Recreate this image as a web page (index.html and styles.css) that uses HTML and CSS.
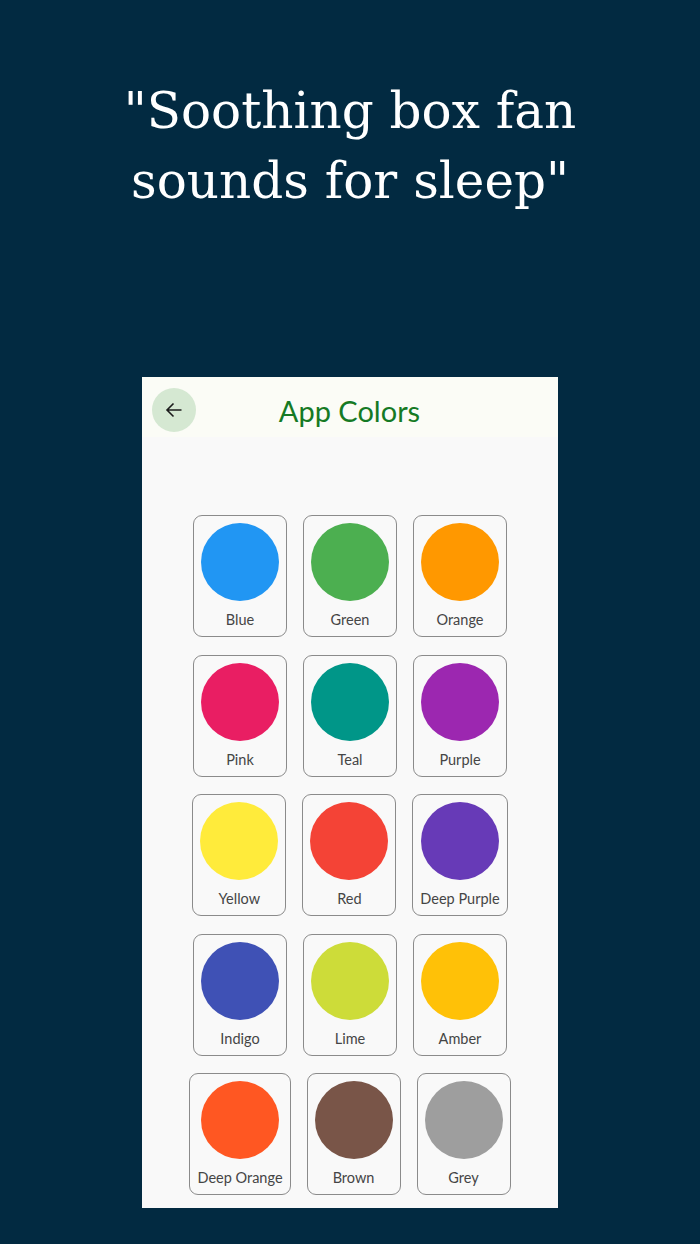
FILE: index.html
```html
<!DOCTYPE html>
<html lang="en">

<head>
    <meta charset="UTF-8">
    <meta name="viewport" content="width=device-width, initial-scale=1.0">
    <title>App Colors</title>
    <link rel="stylesheet" href="styles.css">
</head>

<body>
    <h1 class="headline">"Soothing box fan<br>sounds for sleep"</h1>

    <main class="tela">
        <header class="barra">
            <button class="voltar" aria-label="Back">
                <svg width="18" height="18" viewBox="0 0 18 18">
                    <path d="M16.5 9H2M8.5 2.5L2 9l6.5 6.5" fill="none" stroke="#1c1c1c" stroke-width="1.6"/>
                </svg>
            </button>
            <h2 class="titulo">App Colors</h2>
        </header>

        <div class="grade">
            <div class="linha">
                <div class="cor"><span class="bola" style="background:#2196f3"></span><span class="nome">Blue</span></div>
                <div class="cor"><span class="bola" style="background:#4caf50"></span><span class="nome">Green</span></div>
                <div class="cor"><span class="bola" style="background:#ff9800"></span><span class="nome">Orange</span></div>
            </div>
            <div class="linha">
                <div class="cor"><span class="bola" style="background:#e91e63"></span><span class="nome">Pink</span></div>
                <div class="cor"><span class="bola" style="background:#009688"></span><span class="nome">Teal</span></div>
                <div class="cor"><span class="bola" style="background:#9c27b0"></span><span class="nome">Purple</span></div>
            </div>
            <div class="linha">
                <div class="cor"><span class="bola" style="background:#ffeb3b"></span><span class="nome">Yellow</span></div>
                <div class="cor"><span class="bola" style="background:#f44336"></span><span class="nome">Red</span></div>
                <div class="cor"><span class="bola" style="background:#673ab7"></span><span class="nome">Deep Purple</span></div>
            </div>
            <div class="linha">
                <div class="cor"><span class="bola" style="background:#3f51b5"></span><span class="nome">Indigo</span></div>
                <div class="cor"><span class="bola" style="background:#cddc39"></span><span class="nome">Lime</span></div>
                <div class="cor"><span class="bola" style="background:#ffc107"></span><span class="nome">Amber</span></div>
            </div>
            <div class="linha">
                <div class="cor"><span class="bola" style="background:#ff5722"></span><span class="nome">Deep Orange</span></div>
                <div class="cor"><span class="bola" style="background:#795548"></span><span class="nome">Brown</span></div>
                <div class="cor"><span class="bola" style="background:#9e9e9e"></span><span class="nome">Grey</span></div>
            </div>
        </div>
    </main>
</body>

</html>
```

FILE: styles.css
```css
* {
    box-sizing: border-box;
}

body {
    margin: 0;
    background: #022a41;
    font-family: Lato, "Noto Sans", sans-serif;
}

.headline {
    margin: 0;
    padding-top: 76px;
    color: #ffffff;
    font-family: "DejaVu Serif", serif;
    font-weight: normal;
    font-size: 50px;
    line-height: 70px;
    text-align: center;
}

.tela {
    width: 416px;
    height: 831px;
    margin: 161px 0 0 142px;
    background: #f9f9f9;
}

.barra {
    position: relative;
    height: 60px;
    background: #fbfcf6;
    display: flex;
    align-items: center;
    justify-content: center;
}

.voltar {
    position: absolute;
    left: 10px;
    top: 11px;
    width: 44px;
    height: 44px;
    border: none;
    border-radius: 50%;
    background: #d5e8d2;
    display: flex;
    align-items: center;
    justify-content: center;
    padding: 0;
}

.titulo {
    margin: 6px 0 0 -1px;
    color: #157a24;
    font-weight: normal;
    font-size: 29px;
}

.grade {
    display: flex;
    flex-direction: column;
    gap: 17.5px;
    padding-top: 78px;
}

.linha {
    display: flex;
    justify-content: center;
    gap: 16px;
}

.cor {
    display: flex;
    flex-direction: column;
    align-items: center;
    min-width: 94px;
    height: 122px;
    padding: 7px 7px 0;
    border: 1px solid #8b8b8b;
    border-radius: 9px;
}

.bola {
    width: 78px;
    height: 78px;
    flex-shrink: 0;
    border-radius: 50%;
}

.nome {
    margin-top: 10px;
    color: #454545;
    font-size: 14.5px;
    white-space: nowrap;
}
```
